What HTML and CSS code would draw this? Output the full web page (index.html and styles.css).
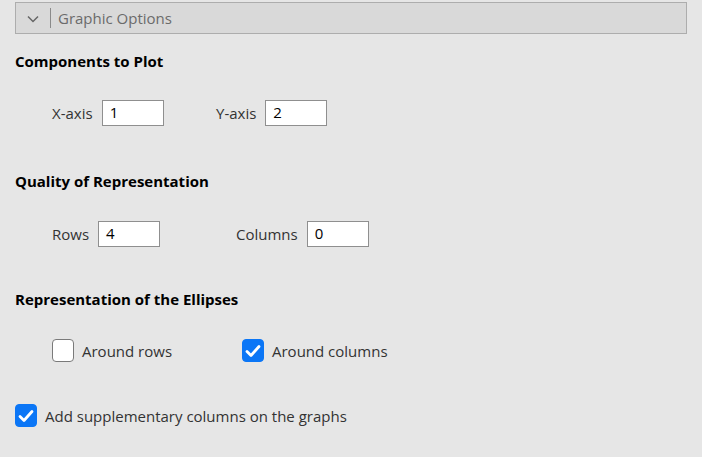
FILE: index.html
```html
<!DOCTYPE html>
<html>
<head>
<meta charset="utf-8">
<link rel="stylesheet" href="styles.css">
</head>
<body>
<div class="panel">
  <div class="header">
    <span class="chev"><svg width="12" height="8" viewBox="0 0 12 8"><path d="M1 1.5 L6 6.5 L11 1.5" fill="none" stroke="#666" stroke-width="1.5"/></svg></span>
    <span class="sep"></span>
    <span class="title">Graphic Options</span>
  </div>

  <div class="heading h1">Components to Plot</div>
  <div class="row r1">
    <label class="field f-x"><span class="lbl">X-axis</span><span class="input">1</span></label>
    <label class="field f-y"><span class="lbl">Y-axis</span><span class="input">2</span></label>
  </div>

  <div class="heading h2">Quality of Representation</div>
  <div class="row r2">
    <label class="field f-rows"><span class="lbl">Rows</span><span class="input">4</span></label>
    <label class="field f-cols"><span class="lbl">Columns</span><span class="input">0</span></label>
  </div>

  <div class="heading h3">Representation of the Ellipses</div>
  <div class="row r3">
    <label class="check c-rows"><span class="box"></span><span class="ctext">Around rows</span></label>
    <label class="check c-cols"><span class="box on"><svg width="16" height="14" viewBox="0 0 16 14"><path d="M2 7.5 L6 11.5 L14 2.5" fill="none" stroke="#fff" stroke-width="2.8" stroke-linecap="round" stroke-linejoin="round"/></svg></span><span class="ctext">Around columns</span></label>
  </div>

  <div class="row r4">
    <label class="check"><span class="box on"><svg width="16" height="14" viewBox="0 0 16 14"><path d="M2 7.5 L6 11.5 L14 2.5" fill="none" stroke="#fff" stroke-width="2.8" stroke-linecap="round" stroke-linejoin="round"/></svg></span><span class="ctext">Add supplementary columns on the graphs</span></label>
  </div>
</div>
</body>
</html>
```

FILE: styles.css
```css
html, body {
  margin: 0;
  padding: 0;
  background: #e6e6e6;
  width: 702px;
  height: 457px;
  overflow: hidden;
}
body {
  font-family: "Open Sans", "Noto Sans", sans-serif;
  color: #333;
}
.panel {
  display: flex;
  flex-direction: column;
  padding: 2px 0 0 15px;
}
.header {
  box-sizing: border-box;
  width: 672px;
  height: 32px;
  background: #d9d9d9;
  border: 1px solid #adadad;
  display: flex;
  align-items: center;
}
.chev {
  width: 34px;
  display: flex;
  justify-content: center;
  padding-top: 1px;
}
.sep {
  width: 1px;
  height: 20px;
  background: #8a8a8a;
}
.title {
  margin-left: 7px;
  font-size: 15px;
  color: #6b6b6b;
}
.heading {
  font-weight: 700;
  font-size: 15px;
  line-height: 20px;
  color: #000;
}
.h1 { margin-top: 17px; }
.h2 { margin-top: 45px; }
.h3 { margin-top: 42px; }
.row {
  display: flex;
  align-items: center;
  padding-left: 37px;
}
.r1 { margin-top: 29px; }
.r2 { margin-top: 30px; }
.r3 { margin-top: 30px; }
.r4 { margin-top: 42px; padding-left: 0; }
.field {
  display: flex;
  align-items: center;
  font-size: 15px;
}
.lbl { margin-right: 9px; }
.input {
  box-sizing: border-box;
  width: 62px;
  height: 26px;
  background: #fff;
  border: 1px solid #8f8f8f;
  padding-left: 7px;
  line-height: 23px;
  font-size: 15px;
  color: #000;
}
.f-x { width: 164px; }
.f-rows { width: 184px; }
.check {
  display: flex;
  align-items: center;
  font-size: 15px;
}
.c-rows { width: 190px; }
.box {
  box-sizing: border-box;
  width: 22px;
  height: 23px;
  border: 1px solid #7a7a7a;
  border-radius: 4px;
  background: #fff;
  display: flex;
  align-items: center;
  justify-content: center;
  margin-right: 8px;
}
.box.on {
  background: #0b76f6;
  border-color: #0b76f6;
}
.ctext { color: #333; }
```
